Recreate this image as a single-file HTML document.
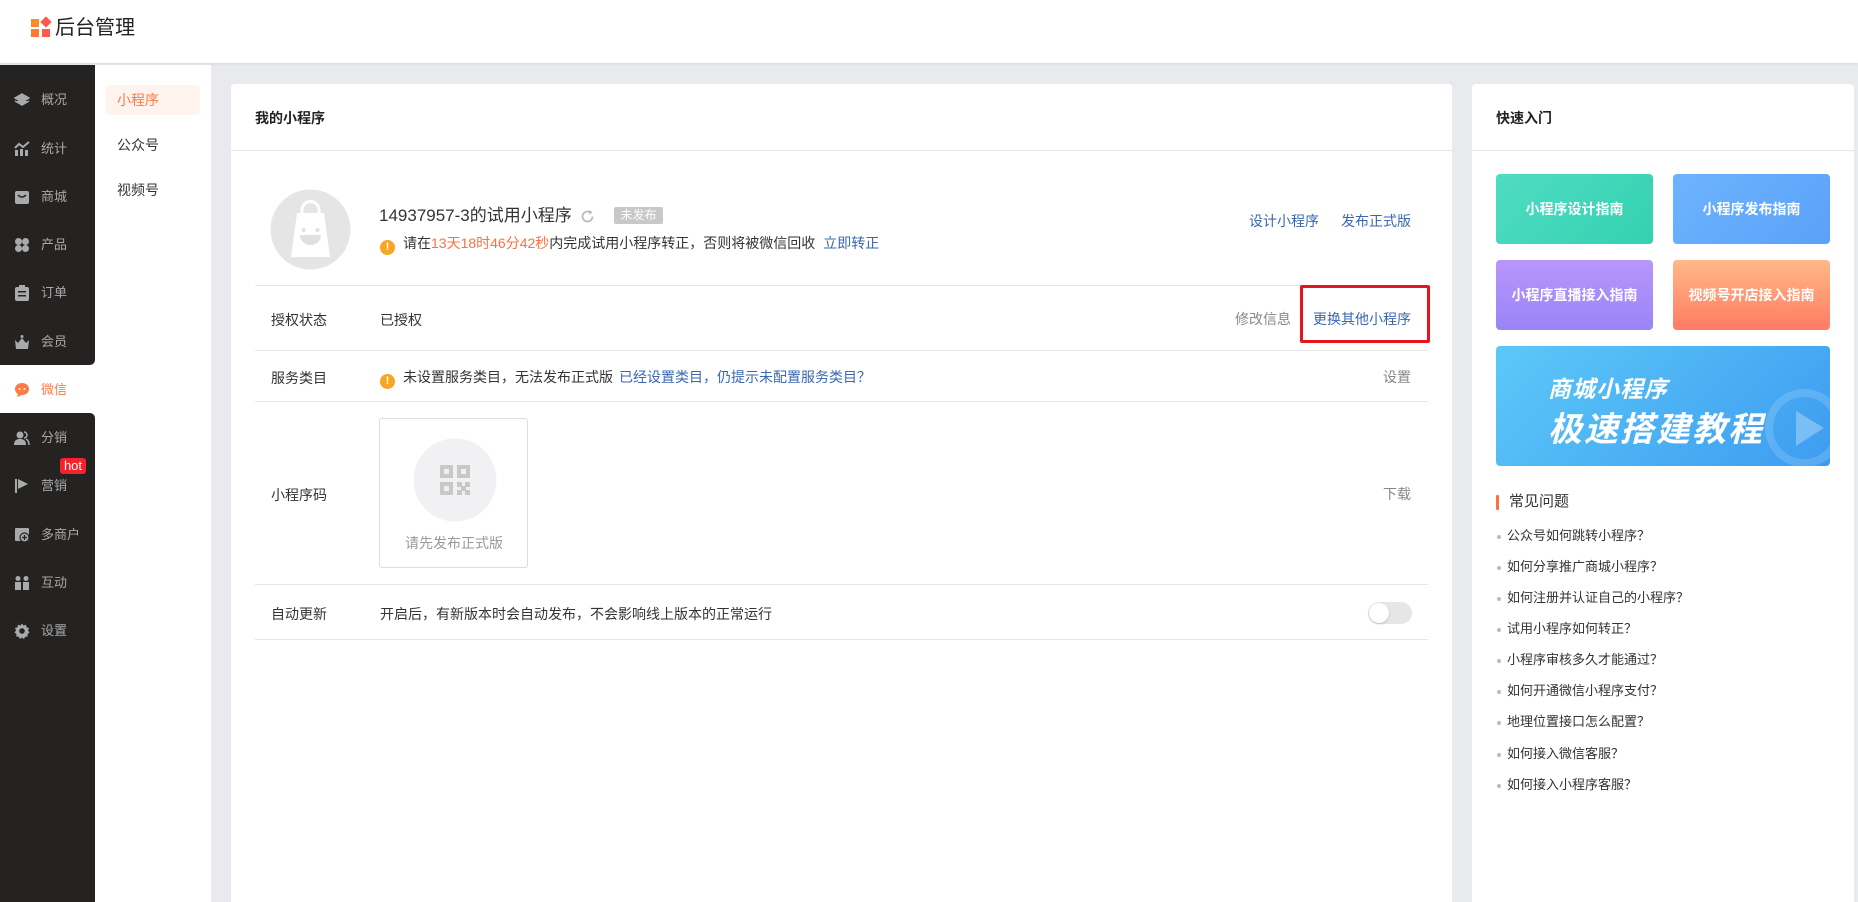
<!DOCTYPE html>
<html style="overflow:hidden;height:902px"><head><meta charset="utf-8">
<style>
*{margin:0;padding:0;box-sizing:border-box}
html,body{overflow:hidden}
body{width:1858px;height:902px;background:#e9eaee;font-family:"Liberation Sans","Noto Sans CJK SC",sans-serif;color:#333;position:relative}
.abs{position:absolute}
.hdr{left:0;top:0;width:1858px;height:63px;background:#fff;box-shadow:0 1px 3px rgba(0,0,0,.08)}
.side{left:0;top:65px;width:95px;height:837px;background:#fff}
.dk{position:absolute;left:0;width:95px;background:#252322}
.mi{position:absolute;left:0;width:95px;height:20px;font-size:13px;color:#a8a8a8;line-height:20px}
.mi svg{position:absolute;left:14px;top:2px}
.mi span{position:absolute;left:41px}
.sub{left:95px;top:65px;width:116px;height:837px;background:#fff}
.card{background:#fff;border-radius:4px 4px 0 0}
.t14{font-size:14px;line-height:20px}
.line{position:absolute;height:1px;background:#e6e6e6}
.blue{color:#3a67b0}
.gray{color:#888}
.warn{display:inline-block;width:15px;height:15px;border-radius:50%;background:#f5a623;color:#fff;font-size:11px;font-weight:bold;text-align:center;line-height:15px;vertical-align:-2px}
.tile{position:absolute;width:157px;height:70px;border-radius:4px;color:#fff;font-weight:bold;font-size:14px;text-align:center;line-height:70px;overflow:hidden}
.faq{position:absolute;left:1497px;font-size:13px;color:#333;line-height:18px}
.faq:before{content:"";position:absolute;left:0;top:8px;width:4px;height:4px;border-radius:50%;background:#bbb}
.faq span{margin-left:10px}
</style></head><body>
<div class="abs hdr">
 <div class="abs" style="left:31px;top:19px;width:8px;height:8px;background:#ff8a2a"></div>
 <div class="abs" style="left:42px;top:18px;width:8px;height:8px;background:#ff5a4a;transform:rotate(45deg)"></div>
 <div class="abs" style="left:31px;top:29px;width:8px;height:8px;background:#ff7a30"></div>
 <div class="abs" style="left:42px;top:29px;width:8px;height:8px;background:#ff5a4a"></div>
 <div class="abs" style="left:55px;top:15px;font-size:20px;line-height:26px;color:#222">后台管理</div>
</div>
<div class="abs side">
 <div class="dk" style="top:0;height:300px;border-bottom-right-radius:5px"></div>
 <div class="dk" style="top:348px;height:489px;border-top-right-radius:5px"></div>
</div>
<div class="mi" style="top:90px"><svg width="16" height="16" viewBox="0 0 16 16"><path d="M8 2L15 6L8 10L1 6Z M1 9L8 13L15 9" fill="#aaa" stroke="#aaa" stroke-width="1.5"/></svg><span>概况</span></div>
<div class="mi" style="top:139px"><svg width="16" height="16"><rect x="1" y="9" width="3" height="6" fill="#aaa"/><rect x="6" y="8" width="3" height="7" fill="#aaa"/><rect x="11" y="9" width="3" height="6" fill="#aaa"/><path d="M1 7L5 3L9 6L15 1" stroke="#aaa" stroke-width="2" fill="none"/></svg><span>统计</span></div>
<div class="mi" style="top:187px"><svg width="16" height="16"><rect x="1" y="2" width="14" height="13" rx="2" fill="#aaa"/><path d="M4 6Q8 10 12 6" stroke="#252322" stroke-width="1.5" fill="none"/></svg><span>商城</span></div>
<div class="mi" style="top:235px"><svg width="16" height="16"><circle cx="4.5" cy="4.5" r="3.5" fill="#aaa"/><circle cx="11.5" cy="4.5" r="3.5" fill="#aaa"/><circle cx="4.5" cy="11.5" r="3.5" fill="#aaa"/><circle cx="11.5" cy="11.5" r="3.5" fill="#aaa"/></svg><span>产品</span></div>
<div class="mi" style="top:283px"><svg width="16" height="16"><rect x="1" y="2" width="14" height="14" rx="2" fill="#aaa"/><rect x="5" y="0" width="6" height="4" fill="#aaa"/><rect x="4" y="6" width="8" height="1.5" fill="#252322"/><rect x="4" y="10" width="8" height="1.5" fill="#252322"/></svg><span>订单</span></div>
<div class="mi" style="top:332px"><svg width="16" height="16"><path d="M1 6L4 9L8 4L12 9L15 6L14 15H2Z" fill="#aaa"/><circle cx="8" cy="2.5" r="1.5" fill="#aaa"/></svg><span>会员</span></div>
<div class="mi" style="top:380px;color:#ff7a45"><svg width="16" height="16"><path d="M8 1C12 1 15 3.5 15 7S12 13 8 13L3 15L4 12C2 11 1 9 1 7C1 3.5 4 1 8 1Z" fill="#ff7a45"/><circle cx="5.5" cy="7" r="1" fill="#fff"/><circle cx="10.5" cy="7" r="1" fill="#fff"/></svg><span>微信</span></div>
<div class="mi" style="top:428px"><svg width="16" height="16"><circle cx="6" cy="5" r="3.5" fill="#aaa"/><path d="M0 15C0 10 3 9 6 9S12 10 12 15Z" fill="#aaa"/><path d="M10 2A3 3 0 0 1 10 8M12 9C14 10 15 12 15 15" stroke="#aaa" stroke-width="1.5" fill="none"/></svg><span>分销</span></div>
<div class="mi" style="top:476px"><svg width="16" height="16"><rect x="1" y="1" width="2" height="14" fill="#aaa"/><path d="M4 1L14 6L4 11Z" fill="#aaa"/></svg><span>营销</span></div>
<div class="abs" style="left:60px;top:458px;width:26px;height:16px;background:#f5222d;border-radius:3px;color:#fff;font-size:13px;line-height:16px;text-align:center">hot</div>
<div class="mi" style="top:525px"><svg width="16" height="16"><rect x="1" y="1" width="14" height="13" rx="1" fill="#aaa"/><circle cx="10.5" cy="10.5" r="4.5" fill="#aaa" stroke="#252322" stroke-width="1.2"/><path d="M8 10.5H13M10.5 8V13" stroke="#252322" stroke-width="1.3"/></svg><span>多商户</span></div>
<div class="mi" style="top:573px"><svg width="16" height="16"><circle cx="4" cy="3.5" r="2.5" fill="#aaa"/><circle cx="12" cy="3.5" r="2.5" fill="#aaa"/><rect x="1" y="7" width="6" height="8" fill="#aaa"/><rect x="9" y="7" width="6" height="8" fill="#aaa"/></svg><span>互动</span></div>
<div class="mi" style="top:621px"><svg width="16" height="16" viewBox="0 0 16 16"><path d="M8 0.5L9.5 2.5L12 1.8L12.5 4.3L15 5L14 7.5L15.5 9.5L13.5 11L13.8 13.5L11.2 13.7L10 16L8 14.5L6 16L4.8 13.7L2.2 13.5L2.5 11L0.5 9.5L2 7.5L1 5L3.5 4.3L4 1.8L6.5 2.5Z" fill="#aaa"/><circle cx="8" cy="8" r="2.8" fill="#252322"/></svg><span>设置</span></div>

<div class="abs sub">
 <div class="abs" style="left:11px;top:20px;width:94px;height:30px;background:#fff3ee;border-radius:4px"></div>
 <div class="abs t14" style="left:22px;top:25px;color:#ff7a45">小程序</div>
 <div class="abs t14" style="left:22px;top:70px;color:#333">公众号</div>
 <div class="abs t14" style="left:22px;top:115px;color:#333">视频号</div>
</div>

<div class="abs card" style="left:231px;top:84px;width:1221px;height:818px"></div>
<div class="abs t14" style="left:255px;top:108px;font-weight:bold;color:#222">我的小程序</div>
<div class="line" style="left:231px;top:150px;width:1221px"></div>
<svg class="abs" style="left:270px;top:189px" width="81" height="81"><circle cx="40.5" cy="40.5" r="40" fill="#e5e5e5"/><path d="M27 24L54 24L60 68L21 68Z" fill="#fff"/><path d="M32 28V21A8.5 8.5 0 0 1 49 21V28" stroke="#fff" stroke-width="3" fill="none"/><circle cx="33.5" cy="41" r="2" fill="#e0e0e0"/><circle cx="47.5" cy="41" r="2" fill="#e0e0e0"/><path d="M30 46H51A10.5 10 0 0 1 30 46Z" fill="#e0e0e0"/></svg>
<div class="abs" style="left:379px;top:205px;font-size:17px;line-height:22px;color:#333">14937957-3的试用小程序</div>
<svg class="abs" style="left:580px;top:209px" width="15" height="15" viewBox="0 0 15 15"><path d="M12.5 7.5A5 5 0 1 1 10 3.2" stroke="#bbb" stroke-width="1.8" fill="none"/><path d="M9 1L12.5 3L9.5 6Z" fill="#bbb"/></svg>
<div class="abs" style="left:614px;top:207px;width:49px;height:17px;background:#c8c8c8;border-radius:2px;color:#fff;font-size:12px;line-height:17px;text-align:center">未发布</div>
<div class="abs t14" style="left:380px;top:233px;white-space:nowrap"><span class="warn">!</span><span style="margin-left:8px">请在<span style="color:#ff7043">13天18时46分42秒</span>内完成试用小程序转正，否则将被微信回收</span><span class="blue" style="margin-left:8px">立即转正</span></div>
<div class="abs t14 blue" style="left:1249px;top:211px">设计小程序</div>
<div class="abs t14 blue" style="left:1341px;top:211px">发布正式版</div>
<div class="line" style="left:255px;top:285px;width:1173px"></div>
<div class="abs t14" style="left:271px;top:310px">授权状态</div>
<div class="abs t14" style="left:380px;top:310px">已授权</div>
<div class="abs t14 gray" style="left:1235px;top:309px">修改信息</div>
<div class="abs t14 blue" style="left:1313px;top:309px">更换其他小程序</div>
<div class="abs" style="left:1300px;top:285px;width:130px;height:58px;border:3px solid #e8141c;border-radius:2px"></div>
<div class="line" style="left:255px;top:350px;width:1173px"></div>
<div class="abs t14" style="left:271px;top:368px">服务类目</div>
<div class="abs t14" style="left:380px;top:367px;white-space:nowrap"><span class="warn">!</span><span style="margin-left:8px">未设置服务类目，无法发布正式版</span><span class="blue" style="margin-left:6px">已经设置类目，仍提示未配置服务类目？</span></div>
<div class="abs t14 gray" style="left:1383px;top:367px">设置</div>
<div class="line" style="left:255px;top:401px;width:1173px"></div>
<div class="abs" style="left:379px;top:418px;width:149px;height:150px;border:1px solid #ddd;border-radius:3px"></div>
<svg class="abs" style="left:413px;top:438px" width="84" height="84"><circle cx="42" cy="42" r="41.5" fill="#f1f1f3"/><g fill="#c8c8c8"><rect x="27" y="27" width="13" height="13"/><rect x="44" y="27" width="13" height="13"/><rect x="27" y="44" width="13" height="13"/><rect x="44" y="44" width="5" height="5"/><rect x="52" y="44" width="5" height="5"/><rect x="48" y="48" width="5" height="5"/><rect x="44" y="52" width="5" height="5"/><rect x="52" y="52" width="5" height="5"/></g><g fill="#f1f1f3"><rect x="31" y="31" width="5" height="5"/><rect x="48" y="31" width="5" height="5"/><rect x="31" y="48" width="5" height="5"/></g></svg>
<div class="abs t14" style="left:405px;top:533px;color:#999">请先发布正式版</div>
<div class="abs t14" style="left:271px;top:485px">小程序码</div>
<div class="abs t14 gray" style="left:1383px;top:484px">下载</div>
<div class="line" style="left:255px;top:584px;width:1173px"></div>
<div class="abs t14" style="left:271px;top:604px">自动更新</div>
<div class="abs t14" style="left:380px;top:604px">开启后，有新版本时会自动发布，不会影响线上版本的正常运行</div>
<div class="abs" style="left:1368px;top:602px;width:44px;height:22px;border-radius:11px;background:#e6e6e6"></div>
<div class="abs" style="left:1369px;top:603px;width:20px;height:20px;border-radius:50%;background:#fff;box-shadow:0 1px 2px rgba(0,0,0,.2)"></div>
<div class="line" style="left:255px;top:639px;width:1173px"></div>

<div class="abs card" style="left:1472px;top:84px;width:382px;height:818px"></div>
<div class="abs t14" style="left:1496px;top:108px;font-weight:bold;color:#222">快速入门</div>
<div class="line" style="left:1472px;top:150px;width:382px"></div>
<div class="tile" style="left:1496px;top:174px;background:linear-gradient(135deg,#4fdcc4,#34d1b0)">小程序设计指南</div>
<div class="tile" style="left:1673px;top:174px;background:linear-gradient(135deg,#6db3ff,#5aa2f8)">小程序发布指南</div>
<div class="tile" style="left:1496px;top:260px;background:linear-gradient(180deg,#b896fb,#9a84f8)">小程序直播接入指南</div>
<div class="tile" style="left:1673px;top:260px;background:linear-gradient(180deg,#ffb989,#ff7b62)">视频号开店接入指南</div>
<div class="abs" style="left:1496px;top:346px;width:334px;height:120px;border-radius:4px;background:linear-gradient(135deg,#5cc8f8,#3d9cf0);overflow:hidden">
 <div class="abs" style="left:52px;top:24px;color:#fff;font-size:23px;font-weight:bold;font-style:italic;letter-spacing:1px">商城小程序</div>
 <div class="abs" style="left:52px;top:56px;color:#fff;font-size:34px;font-weight:bold;font-style:italic;letter-spacing:2px">极速搭建教程</div>
 <svg class="abs" style="left:268px;top:40px" width="70" height="80"><circle cx="40" cy="42" r="35" fill="none" stroke="rgba(255,255,255,.15)" stroke-width="8"/><path d="M32 25L60 42L32 60Z" fill="rgba(255,255,255,.3)"/></svg>
</div>
<div class="abs" style="left:1496px;top:495px;width:3px;height:15px;background:#ff6d45;border-radius:1px"></div>
<div class="abs t14" style="left:1509px;top:492px;font-size:15px">常见问题</div>
<div class="faq" style="top:527px"><span>公众号如何跳转小程序？</span></div>
<div class="faq" style="top:558px"><span>如何分享推广商城小程序？</span></div>
<div class="faq" style="top:589px"><span>如何注册并认证自己的小程序？</span></div>
<div class="faq" style="top:620px"><span>试用小程序如何转正？</span></div>
<div class="faq" style="top:651px"><span>小程序审核多久才能通过？</span></div>
<div class="faq" style="top:682px"><span>如何开通微信小程序支付？</span></div>
<div class="faq" style="top:713px"><span>地理位置接口怎么配置？</span></div>
<div class="faq" style="top:745px"><span>如何接入微信客服？</span></div>
<div class="faq" style="top:776px"><span>如何接入小程序客服？</span></div>
</body></html>
